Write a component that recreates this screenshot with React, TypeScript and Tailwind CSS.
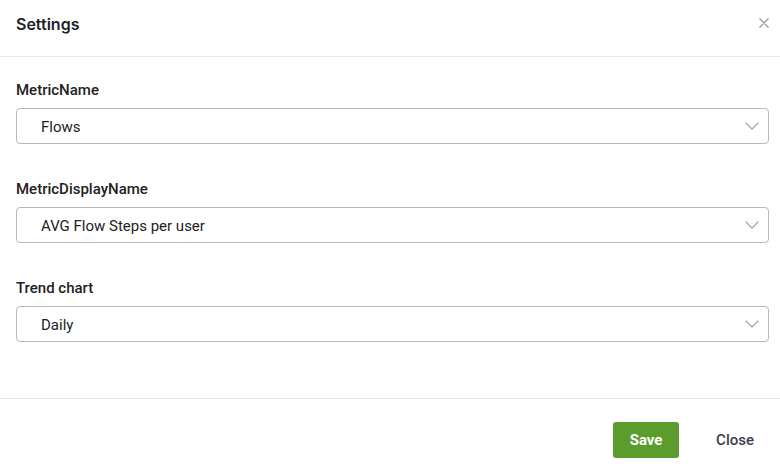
import React from 'react';

const fields = [
  { label: 'MetricName', value: 'Flows' },
  { label: 'MetricDisplayName', value: 'AVG Flow Steps per user' },
  { label: 'Trend chart', value: 'Daily' },
];

const Chevron: React.FC = () => (
  <svg width="14" height="8" viewBox="0 0 14 8" fill="none" className="text-[#a8a8a8]">
    <path d="M1 1l6 6 6-6" stroke="currentColor" strokeWidth="1.3" strokeLinecap="round" strokeLinejoin="round" />
  </svg>
);

const App: React.FC = () => {
  return (
    <div className="w-[780px] h-[473px] flex flex-col bg-white font-['Roboto',sans-serif]">
      {/* Header */}
      <header className="h-[57px] shrink-0 border-b border-[#e8e8ec] flex items-start justify-between pl-4 pr-[6px] pt-3">
        <h1 className="font-['Inter',sans-serif] text-base leading-6 font-semibold text-[#1d1e2c]">Settings</h1>
        <button className="w-5 h-5 mt-[1px] flex items-center justify-center text-[#9c9ca8]">
          <svg width="10" height="10" viewBox="0 0 10 10" fill="none">
            <path d="M0.8 0.8l8.4 8.4M9.2 0.8l-8.4 8.4" stroke="currentColor" strokeWidth="1.3" strokeLinecap="round" />
          </svg>
        </button>
      </header>

      {/* Body */}
      <main className="flex-1 flex flex-col gap-[35px] pl-4 pr-[11px] pt-[23px]">
        {fields.map((f) => (
          <div key={f.label} className="flex flex-col gap-2">
            <label className="h-5 text-[15px] font-medium leading-5 text-[#222]">{f.label}</label>
            <div className="h-9 border border-[#b8b8b8] rounded-[4px] flex items-center justify-between pl-6 pr-[9px] text-[15px] text-[#222]">
              <span className="pt-[2px]">{f.value}</span>
              <Chevron />
            </div>
          </div>
        ))}
      </main>

      {/* Footer */}
      <footer className="h-[75px] shrink-0 border-t border-[#e8e8ec] flex items-start justify-end pt-[23px] gap-[11px]">
        <button className="h-9 w-[66px] rounded-[3px] bg-[#5c9c2d] text-white text-[15px] font-bold">Save</button>
        <button className="h-9 pl-[26px] pr-[26px] text-[15px] font-medium text-[#3a3c4e]">Close</button>
      </footer>
    </div>
  );
};

export default App;
